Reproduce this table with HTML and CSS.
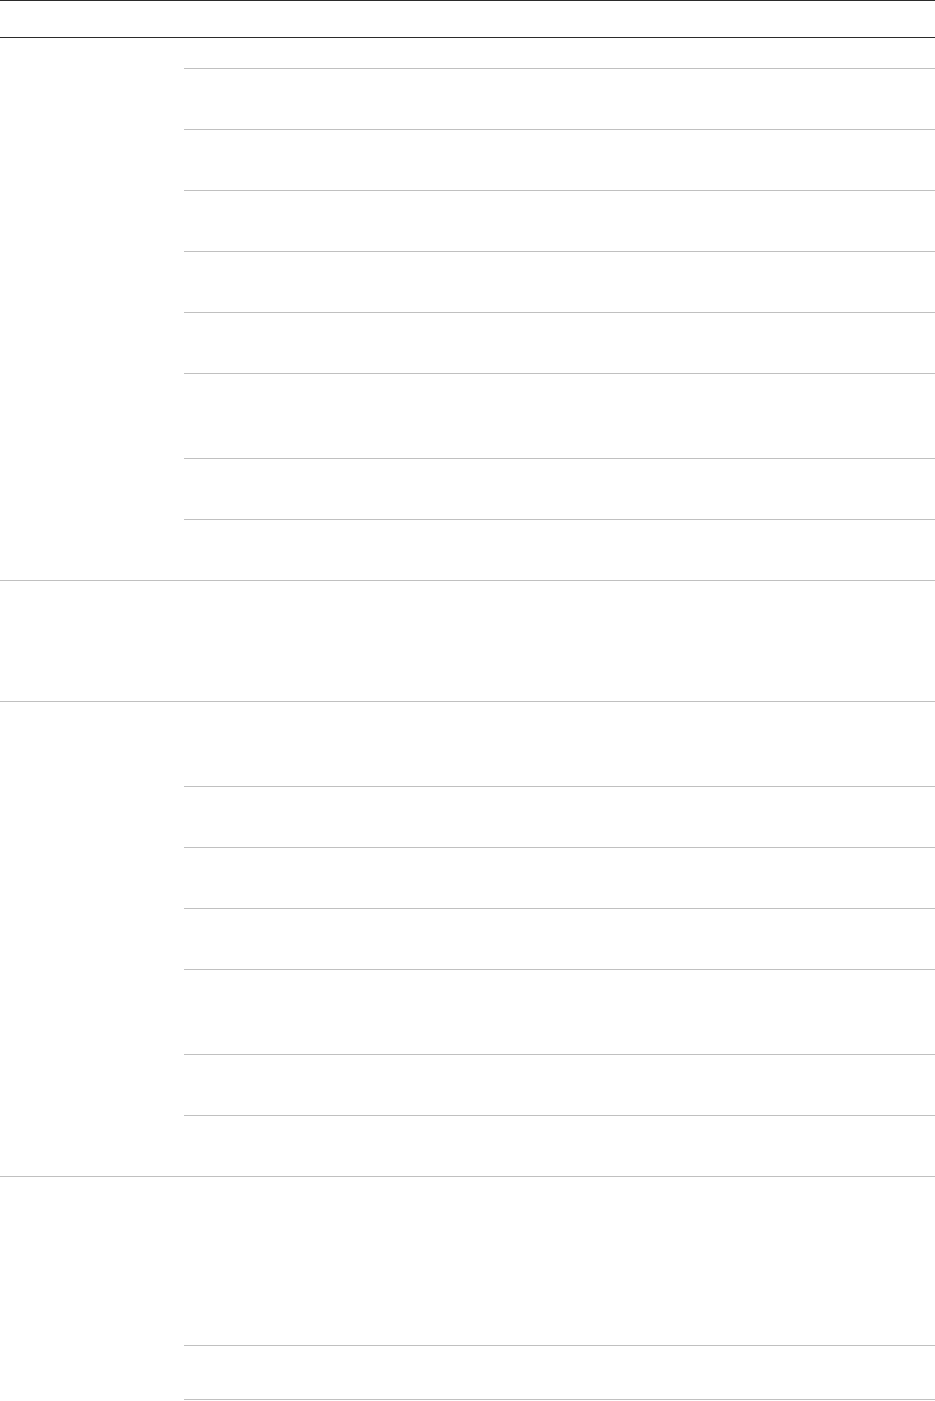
FILE: index.html
```html
<!DOCTYPE html>
<html lang="en">
<head>
    <meta charset="UTF-8">
    <meta name="viewport" content="width=device-width, initial-scale=1.0">
    <title>Table</title>
    <link rel="stylesheet" href="styles.css">
</head>
<body>
    <div class="table">
        <div class="table-head"></div>

        <div class="group first">
            <div class="group-label"></div>
            <div class="group-rows">
                <div class="row short"></div>
                <div class="row"></div>
                <div class="row"></div>
                <div class="row"></div>
                <div class="row"></div>
                <div class="row"></div>
                <div class="row tall"></div>
                <div class="row"></div>
                <div class="row"></div>
            </div>
        </div>

        <div class="group">
            <div class="group-label"></div>
            <div class="group-rows">
                <div class="row single"></div>
            </div>
        </div>

        <div class="group">
            <div class="group-label"></div>
            <div class="group-rows">
                <div class="row tall"></div>
                <div class="row"></div>
                <div class="row"></div>
                <div class="row"></div>
                <div class="row tall"></div>
                <div class="row"></div>
                <div class="row"></div>
            </div>
        </div>

        <div class="group">
            <div class="group-label"></div>
            <div class="group-rows">
                <div class="row huge"></div>
                <div class="row small"></div>
                <div class="row"></div>
            </div>
        </div>
    </div>
</body>
</html>
```

FILE: styles.css
```css
* {
    margin: 0;
    padding: 0;
    box-sizing: border-box;
}
body {
    font-family: "Liberation Sans", Arial, sans-serif;
    font-size: 14px;
    color: #333;
    background: #fff;
}
.table {
    width: 100%;
}
.table-head {
    height: 38px;
    border-top: 1px solid #2b2b2b;
    border-bottom: 1px solid #2b2b2b;
}
.group {
    display: flex;
    border-top: 1px solid #c0c0c0;
}
.group.first {
    border-top: none;
}
.group-label {
    width: 184px;
    flex: none;
}
.group-rows {
    flex: 1;
}
.row {
    height: 61px;
    border-top: 1px solid #c0c0c0;
}
.row:first-child {
    border-top: none;
    height: 60px;
}
.row.short:first-child {
    height: 30px;
}
.row.tall {
    height: 85px;
}
.row.tall:first-child {
    height: 84px;
}
.row.single:first-child {
    height: 120px;
}
.row.huge:first-child {
    height: 168px;
}
.row.small {
    height: 54px;
}
```
